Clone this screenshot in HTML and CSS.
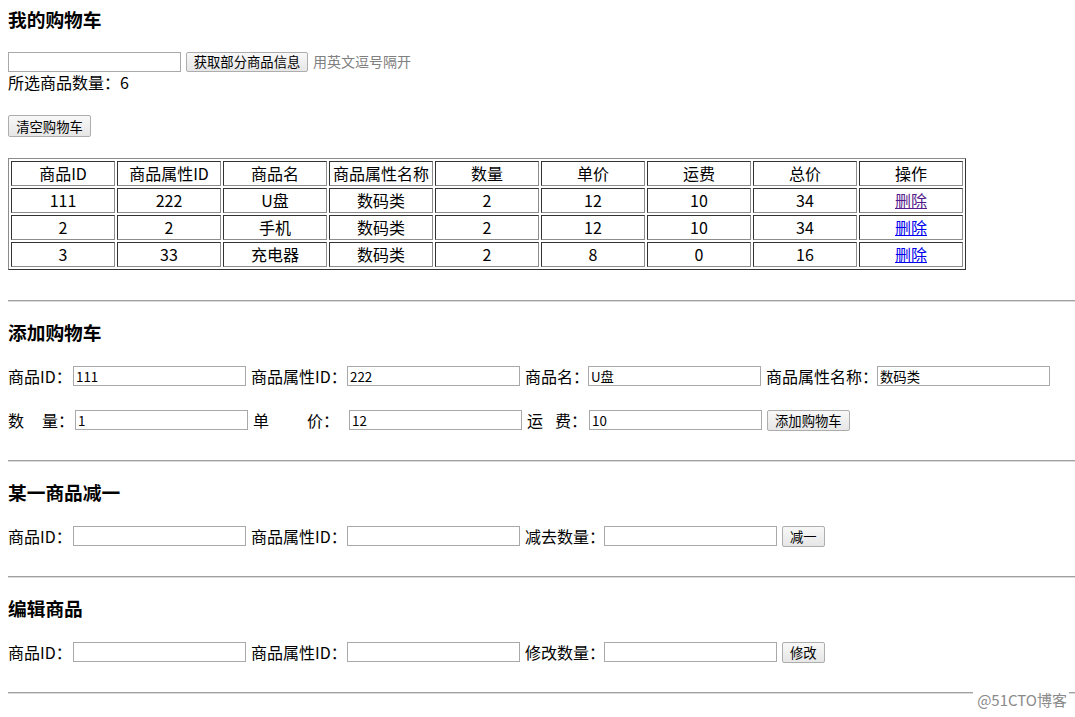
FILE: index.html
```html
<!DOCTYPE html>
<html lang="zh-CN">
<head>
<meta charset="utf-8">
<title>我的购物车</title>
<link rel="stylesheet" href="styles.css">
</head>
<body>
<h3 class="title first">我的购物车</h3>
<div class="fetch-row">
  <input class="inp" type="text">
  <button class="btn">获取部分商品信息</button>
  <span class="hint">用英文逗号隔开</span>
</div>
<div class="count">所选商品数量：6</div>
<div class="clear-row"><button class="btn btn-tall">清空购物车</button></div>
<table class="cart">
  <tr><th>商品ID</th><th>商品属性ID</th><th>商品名</th><th>商品属性名称</th><th>数量</th><th>单价</th><th>运费</th><th>总价</th><th>操作</th></tr>
  <tr><td>111</td><td>222</td><td>U盘</td><td>数码类</td><td>2</td><td>12</td><td>10</td><td>34</td><td><a href="#" class="visited">删除</a></td></tr>
  <tr><td>2</td><td>2</td><td>手机</td><td>数码类</td><td>2</td><td>12</td><td>10</td><td>34</td><td><a href="#">删除</a></td></tr>
  <tr><td>3</td><td>33</td><td>充电器</td><td>数码类</td><td>2</td><td>8</td><td>0</td><td>16</td><td><a href="#">删除</a></td></tr>
</table>
<hr class="sep sep-first">

<h3 class="title">添加购物车</h3>
<div class="form-row">
  <span class="lbl l65">商品ID：</span><input class="inp" type="text" value="111">
  <span class="lbl l96">商品属性ID：</span><input class="inp" type="text" value="222">
  <span class="lbl l63">商品名：</span><input class="inp" type="text" value="U盘">
  <span class="lbl l111">商品属性名称：</span><input class="inp" type="text" value="数码类">
</div>
<div class="form-row row-gap">
  <span class="lbl l67"><span class="sp18">数</span>量：</span><input class="inp" type="text" value="1">
  <span class="lbl l96"><span class="sp38">单</span>价：</span><input class="inp" type="text" value="12">
  <span class="lbl l62"><span class="sp12">运</span>费：</span><input class="inp" type="text" value="10">
  <button class="btn btn-row">添加购物车</button>
</div>
<hr class="sep">

<h3 class="title">某一商品减一</h3>
<div class="form-row">
  <span class="lbl l65">商品ID：</span><input class="inp" type="text">
  <span class="lbl l96">商品属性ID：</span><input class="inp" type="text">
  <span class="lbl l79">减去数量：</span><input class="inp" type="text">
  <button class="btn btn-row">减一</button>
</div>
<hr class="sep">

<h3 class="title">编辑商品</h3>
<div class="form-row">
  <span class="lbl l65">商品ID：</span><input class="inp" type="text">
  <span class="lbl l96">商品属性ID：</span><input class="inp" type="text">
  <span class="lbl l79">修改数量：</span><input class="inp" type="text">
  <button class="btn btn-row">修改</button>
</div>
<hr class="sep">

<div class="watermark">@51CTO博客</div>
</body>
</html>
```

FILE: styles.css
```css
html, body {
  background: #fff;
}
body {
  margin: 8px 0 8px 8px;
  font-family: "Noto Sans CJK SC", "Noto Sans", sans-serif;
  font-size: 16px;
  line-height: 21px;
  color: #000;
  position: relative;
  min-height: 701px;
}
.title {
  font-size: 18.72px;
  line-height: 25px;
  font-weight: bold;
  margin: 17px 0 20px;
}
.title.first {
  margin-top: -2px;
  margin-bottom: 20px;
}
.inp {
  box-sizing: border-box;
  width: 173px;
  height: 20px;
  border: 1px solid #a9a9a9;
  padding: 1px 2px;
  margin: 0;
  font-family: "Noto Sans CJK SC", "Noto Sans", sans-serif;
  font-size: 13.33px;
  line-height: 16px;
  color: #000;
  background: #fff;
  outline: none;
}
.btn {
  box-sizing: border-box;
  height: 21px;
  margin: 0;
  padding: 0 6px;
  border: 1px solid #adadad;
  border-radius: 2px;
  background: linear-gradient(#f8f8f8, #e6e6e6);
  font-family: "Noto Sans CJK SC", "Noto Sans", sans-serif;
  font-size: 13.33px;
  line-height: 17px;
  color: #000;
}
.fetch-row {
  display: flex;
  align-items: center;
  height: 21px;
}
.fetch-row .btn {
  margin-left: 5px;
  width: 122px;
  height: 20px;
}
.hint {
  margin-left: 5px;
  font-size: 14px;
  color: #808080;
}
.count {
  height: 21px;
}
.clear-row {
  margin-top: 22px;
  height: 22px;
  display: flex;
}
.btn-tall {
  height: 22px;
  width: 83px;
  padding: 0;
}
.cart {
  margin-top: 21px;
  border-collapse: separate;
  border-spacing: 2px;
  border: 1px solid;
  border-color: #8c8c8c #333 #333 #8c8c8c;
}
.cart th,
.cart td {
  width: 100px;
  padding: 1px;
  height: 21px;
  line-height: 21px;
  border: 1px solid;
  border-color: #333 #8c8c8c #8c8c8c #333;
  font-weight: normal;
  text-align: center;
  white-space: nowrap;
}
.cart a {
  color: #0000ee;
  text-decoration: underline;
}
.cart a.visited {
  color: #551a8b;
}
.sep {
  box-sizing: border-box;
  height: 2px;
  margin: 30px 0 0 0;
  border: 0;
  border-top: 1px solid #a0a0a0;
  border-bottom: 1px solid #dcdcdc;
}
.form-row {
  display: flex;
  align-items: center;
  height: 24px;
}
.form-row + .sep {
  margin-top: 28px;
}
.row-gap {
  margin-top: 20px;
}
.form-row .inp {
  margin-right: 5px;
}
.lbl {
  display: inline-block;
  white-space: nowrap;
  flex: none;
}
.l62 { width: 62px; }
.l63 { width: 63px; }
.l65 { width: 65px; }
.l67 { width: 67px; }
.l79 { width: 79px; }
.l96 { width: 96px; }
.l111 { width: 111px; }
.sp18 { margin-right: 18px; }
.sp38 { margin-right: 38px; }
.sp12 { margin-right: 12px; }
.btn-row {
  height: 21px;
  padding: 0 7px;
}
.watermark {
  position: absolute;
  right: 6px;
  bottom: 0;
  font-size: 15px;
  line-height: 18px;
  color: #8a8a8a;
  background: #fff;
  padding: 0 2px 0 4px;
  font-family: "Noto Sans CJK SC", "Noto Sans", sans-serif;
}
```
